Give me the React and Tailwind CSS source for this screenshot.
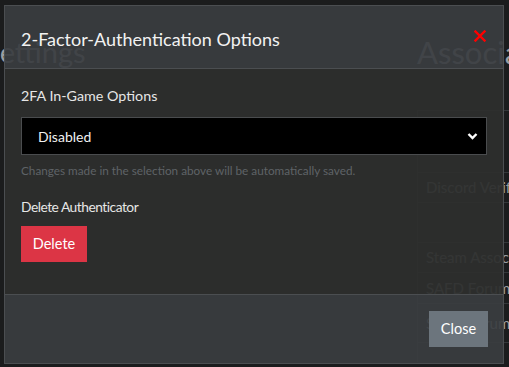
import React from 'react';

const rows = [
  { name: '', h: 'h-[62px]' },
  { name: 'Discord Verification', h: 'h-[30px]' },
  { name: '', h: 'h-[40px]' },
  { name: 'Steam Association', h: 'h-[30px]' },
  { name: 'SAFD Forum', h: 'h-[31px]' },
  { name: 'SAFD Forum', h: 'h-[39px]' },
  { name: '', h: 'h-[20px]' },
];

function BackgroundPage() {
  return (
    <div className="flex h-full text-[#9a9ea2]">
      <div className="ml-[-16px] w-[200px] shrink-0 pt-[34px]">
        <h2 className="text-[29px] leading-[36px]">Settings</h2>
        <div className="mt-[7px] ml-[-24px] flex flex-col gap-[6px] text-[13px] leading-[16px] text-[#3f7aa0]">
          <span>Data</span>
          <span>Data</span>
          <span>Data</span>
        </div>
      </div>
      <div className="ml-[233px] w-[200px] shrink-0 pt-[34px]">
        <h2 className="whitespace-nowrap text-[31px] leading-[36px]">Associated Accounts</h2>
        <div className="mt-[40px] border-l border-[#34373a]">
          {rows.map((r, i) => (
            <div key={i} className={`flex ${r.h} items-center border-t border-[#34373a] px-[8px] text-[15px] whitespace-nowrap`}>
              {r.name}
            </div>
          ))}
        </div>
      </div>
    </div>
  );
}

export default function App() {
  return (
    <div className="relative h-[367px] w-[509px] overflow-hidden bg-[#1b1c1d] font-['Lato','Open_Sans',sans-serif]">
      <BackgroundPage />

      <div className="absolute left-[4px] top-[5px] flex h-[359px] w-[500px] flex-col border border-[#4b4e51]">
        <div className="flex h-[63px] shrink-0 items-center justify-between border-b border-[#4b4e51] bg-[#3a3d40]/92 pl-[16px] pr-[17px]">
          <h5 className="pt-[3px] text-[18px] leading-[24px] text-[#f2f2f2]">2-Factor-Authentication Options</h5>
          <svg width="12" height="12" viewBox="0 0 12 12" className="mb-[2px]">
            <path d="M1.5 1.5 L10.5 10.5 M10.5 1.5 L1.5 10.5" stroke="#ff0000" strokeWidth="2.4" strokeLinecap="square" />
          </svg>
        </div>

        <div className="flex flex-1 flex-col bg-[#2e2f2e]/94 px-[16px] pt-[16px]">
          <label className="text-[14.3px] leading-[22px] text-[#e6e6e6]">2FA In-Game Options</label>
          <div className="mt-[10px] flex h-[38px] items-center justify-between border border-[#4a4c4e] bg-black pl-[16px] pr-[8px]">
            <span className="text-[14px] text-[#f0f0f0]">Disabled</span>
            <svg width="11" height="8" viewBox="0 0 11 8">
              <path d="M1.5 2 L5.5 6 L9.5 2" fill="none" stroke="#ffffff" strokeWidth="2.4" />
            </svg>
          </div>
          <p className="mt-[8px] text-[11.75px] leading-[16px] text-[#5f6367]">
            Changes made in the selection above will be automatically saved.
          </p>
          <label className="mt-[17px] text-[13.8px] leading-[22px] tracking-[-0.5px] text-[#e6e6e6]">Delete Authenticator</label>
          <button className="mt-[8px] h-[36px] w-[66px] bg-[#dc3545] text-[14.5px] text-white">Delete</button>
        </div>

        <div className="flex h-[69px] shrink-0 items-center justify-end border-t border-[#4b4e51] bg-[#3a3d40]/92 pr-[15px]">
          <button className="h-[36px] w-[59px] bg-[#6c757d] text-[14.5px] text-white">Close</button>
        </div>
      </div>
    </div>
  );
}
